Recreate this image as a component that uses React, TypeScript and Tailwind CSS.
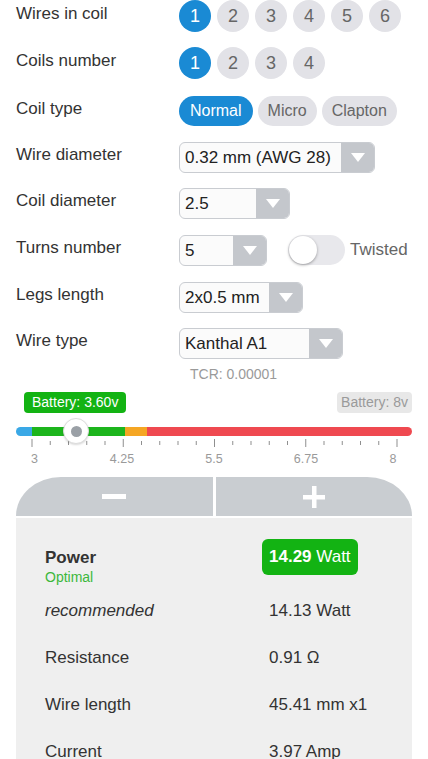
import React from "react";

function Circle({ n, active }: { n: number; active?: boolean }) {
  return (
    <div
      className={
        active
          ? "w-[32px] h-[32px] rounded-full flex items-center justify-center text-[18px] bg-[#1a8ad4] text-white shrink-0"
          : "w-[32px] h-[32px] rounded-full flex items-center justify-center text-[18px] bg-[#e2e2e7] text-[#666] shrink-0"
      }
    >
      {n}
    </div>
  );
}

function Select({ value, cls }: { value: string; cls: string }) {
  return (
    <div className={"flex h-[31px] rounded-[6px] border border-[#c9ccd1] bg-[#fbfbfb] overflow-hidden " + cls}>
      <div className="flex-1 flex items-center pl-[5px] pt-[2px] text-[17px] text-[#222] whitespace-nowrap">{value}</div>
      <div className="w-[33px] bg-[#c4c7cc] flex items-center justify-center">
        <svg width="14" height="9" viewBox="0 0 14 9">
          <path d="M0 0 L14 0 L7 9 Z" fill="#ffffff" />
        </svg>
      </div>
    </div>
  );
}

function Row({ label, children, cls }: { label: string; children: React.ReactNode; cls?: string }) {
  return (
    <div className={"flex items-center h-[32px] " + (cls ?? "")}>
      <div className="w-[179px] pl-4 text-[17px] text-[#333] -mt-[5px] shrink-0">{label}</div>
      {children}
    </div>
  );
}

function Pill({ text, active }: { text: string; active?: boolean }) {
  return (
    <div
      className={
        active
          ? "h-[30px] px-[11px] rounded-full flex items-center text-[16px] bg-[#1a8ad4] text-white"
          : "h-[30px] px-[10px] rounded-full flex items-center text-[16px] bg-[#e2e2e7] text-[#666]"
      }
    >
      {text}
    </div>
  );
}

function DataRow({ label, value, italic }: { label: string; value: string; italic?: boolean }) {
  return (
    <div className="flex items-center h-[47px] text-[17px] text-[#333]">
      <div className={italic ? "w-[224px] italic" : "w-[224px]"}>{label}</div>
      <div>{value}</div>
    </div>
  );
}

export default function App() {
  const ticks: { x: number; major: boolean }[] = [];
  for (let i = 0; i <= 20; i++) {
    ticks.push({ x: 32 + i * 18.25, major: i % 5 === 0 });
  }
  const labels = [
    { x: 34.5, t: "3" },
    { x: 122, t: "4.25" },
    { x: 214, t: "5.5" },
    { x: 306, t: "6.75" },
    { x: 393, t: "8" },
  ];

  return (
    <div className="w-[428px] h-[759px] overflow-hidden bg-white" style={{ fontFamily: '"Liberation Sans", Arial, sans-serif' }}>
      <Row label="Wires in coil">
        <div className="flex gap-[6px]">
          <Circle n={1} active />
          <Circle n={2} />
          <Circle n={3} />
          <Circle n={4} />
          <Circle n={5} />
          <Circle n={6} />
        </div>
      </Row>
      <Row label="Coils number" cls="mt-[15px]">
        <div className="flex gap-[6px]">
          <Circle n={1} active />
          <Circle n={2} />
          <Circle n={3} />
          <Circle n={4} />
        </div>
      </Row>
      <Row label="Coil type" cls="mt-[16px]">
        <div className="flex gap-[5px]">
          <Pill text="Normal" active />
          <Pill text="Micro" />
          <Pill text="Clapton" />
        </div>
      </Row>
      <Row label="Wire diameter" cls="mt-[14px]">
        <Select value="0.32 mm (AWG 28)" cls="w-[196px]" />
      </Row>
      <Row label="Coil diameter" cls="mt-[14px]">
        <Select value="2.5" cls="w-[111px]" />
      </Row>
      <Row label="Turns number" cls="mt-[15px]">
        <Select value="5" cls="w-[88px]" />
        <div className="ml-[21px] w-[57px] h-[30px] rounded-full bg-[#e8e8ec] relative">
          <div className="absolute left-[1px] top-[1px] w-[28px] h-[28px] rounded-full bg-white shadow-[0_1px_3px_rgba(0,0,0,0.35)]" />
        </div>
        <div className="ml-[5px] text-[17px] text-[#666]">Twisted</div>
      </Row>
      <Row label="Legs length" cls="mt-[15px]">
        <Select value="2x0.5 mm" cls="w-[124px]" />
      </Row>
      <Row label="Wire type" cls="mt-[14px]">
        <Select value="Kanthal A1" cls="w-[164px]" />
      </Row>
      <div className="pl-[190px] mt-[7px] text-[14px] leading-[16px] text-[#9a9a9a]">TCR: 0.00001</div>

      <div className="mx-4 mt-[10px] flex justify-between">
        <div className="ml-[8px] h-[21px] px-[8px] rounded-[4px] bg-[#13b313] text-white text-[14px] flex items-center">Battery: 3.60v</div>
        <div className="h-[21px] px-[4px] rounded-[4px] bg-[#e8e8e8] text-[#9a9a9a] text-[14px] flex items-center">Battery: 8v</div>
      </div>

      <div className="relative mx-4 mt-[4px] h-[28px] flex items-center">
        <div className="flex w-full h-[9px] rounded-full overflow-hidden">
          <div className="w-[16px] bg-[#3aa8e6]" />
          <div className="w-[93px] bg-[#1db51d]" />
          <div className="w-[22px] bg-[#f5a623]" />
          <div className="flex-1 bg-[#ef4950]" />
        </div>
        <div className="absolute left-[47px] top-[1px] w-[26px] h-[26px] rounded-full bg-white border border-[#dcdcdc] shadow-[0_1px_2px_rgba(0,0,0,0.15)] flex items-center justify-center">
          <div className="w-[11px] h-[11px] rounded-full bg-[#9aa0a6]" />
        </div>
      </div>

      <svg width="428" height="30" className="block -mt-[6px]">
        {ticks.map((t, i) => (
          <line
            key={i}
            x1={t.x}
            x2={t.x}
            y1={t.major ? 0 : 2}
            y2={t.major ? 8 : 6}
            stroke="#8f8f8f"
            strokeWidth="1"
          />
        ))}
        {labels.map((l) => (
          <text
            key={l.t}
            x={l.x}
            y={24}
            textAnchor="middle"
            fontSize="12.5"
            fill="#9a9a9a"
            fontFamily='"Liberation Sans", Arial, sans-serif'
          >
            {l.t}
          </text>
        ))}
      </svg>

      <div className="mx-4 mt-[8px] flex gap-[3px] h-[39px]">
        <div className="flex-1 bg-[#c9cdd1] rounded-tl-[46px_40px] flex items-center justify-center">
          <div className="w-[24px] h-[5px] bg-white" />
        </div>
        <div className="flex-1 bg-[#c9cdd1] rounded-tr-[46px_40px] flex items-center justify-center">
          <svg width="24" height="24" viewBox="0 0 24 24">
            <rect x="10" y="1" width="4.5" height="22" fill="#ffffff" />
            <rect x="1" y="10" width="22" height="4.5" fill="#ffffff" />
          </svg>
        </div>
      </div>

      <div className="mx-4 mt-[2px] bg-[#efefef] pl-[29px] pt-[21px] pb-[20px]">
        <div className="flex items-start">
          <div className="w-[217px] pt-[9px]">
            <div className="text-[17px] leading-[20px] font-bold text-[#333]">Power</div>
            <div className="text-[14px] leading-[18px] text-[#3cb83c]">Optimal</div>
          </div>
          <div className="h-[36px] px-[7px] rounded-[6px] bg-[#13b313] text-white text-[17px] flex items-center">
            <span className="font-bold">14.29</span>
            <span>&nbsp;Watt</span>
          </div>
        </div>
        <div className="mt-[1px]">
          <DataRow label="recommended" value="14.13 Watt" italic />
          <DataRow label="Resistance" value="0.91 Ω" />
          <DataRow label="Wire length" value="45.41 mm x1" />
          <DataRow label="Current" value="3.97 Amp" />
        </div>
      </div>
    </div>
  );
}
